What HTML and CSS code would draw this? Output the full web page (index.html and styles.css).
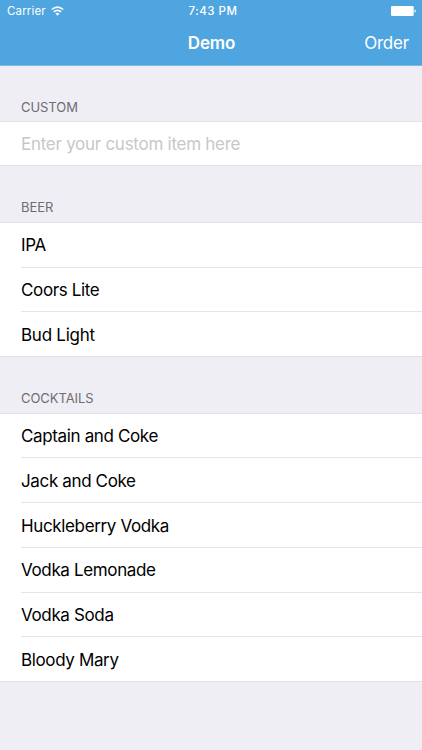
FILE: index.html
```html
<!DOCTYPE html>
<html lang="en">
<head>
<meta charset="utf-8">
<title>Demo</title>
<link rel="stylesheet" href="styles.css">
</head>
<body>
<header class="top">
  <div class="status">
    <div class="carrier"><span>Carrier</span>
      <svg class="wifi" width="13" height="10" viewBox="0 0 13 10" fill="none" stroke="#fff" stroke-width="1.6"><path d="M.8 3.5Q6.5-1.3 12.2 3.5M2.8 5.9Q6.5 2.7 10.2 5.9"/><path d="M4.5 7.5Q6.5 6 8.5 7.5L6.5 9.7Z" fill="#fff" stroke="none"/></svg>
    </div>
    <div class="time">7:43 PM</div>
    <svg class="battery" width="25" height="10" viewBox="0 0 25 10" fill="#fff"><rect width="22.7" height="10" rx="1.2"/><path d="M23.5 3.4Q24.8 3.8 24.8 5T23.5 6.6Z"/></svg>
  </div>
  <nav class="nav"><h1 class="title">Demo</h1><span class="order">Order</span></nav>
</header>
<main>
  <h2 class="heading first"><span>CUSTOM</span></h2>
  <div class="group input"><div class="row placeholder"><span>Enter your custom item here</span></div></div>
  <h2 class="heading"><span>BEER</span></h2>
  <ul class="group">
    <li class="row"><span>IPA</span></li>
    <li class="row"><span>Coors Lite</span></li>
    <li class="row bud"><span>Bud Light</span></li>
  </ul>
  <h2 class="heading"><span>COCKTAILS</span></h2>
  <ul class="group cocktails">
    <li class="row"><span>Captain and Coke</span></li>
    <li class="row"><span>Jack and Coke</span></li>
    <li class="row"><span>Huckleberry Vodka</span></li>
    <li class="row"><span>Vodka Lemonade</span></li>
    <li class="row"><span>Vodka Soda</span></li>
    <li class="row"><span>Bloody Mary</span></li>
  </ul>
</main>
</body>
</html>
```
FILE: styles.css
```css
* { box-sizing: border-box; }
body { margin: 0; height: 750px; overflow: hidden; background: #efeef4; color: #000; font-family: Inter, "Liberation Sans", sans-serif; }
.top { height: 66px; background: #4fa5df; color: #fff; border-bottom: 1px solid #7fb9e2; }
.status { height: 22px; padding: 0 6px 0 7px; display: grid; grid-template-columns: 1fr auto 1fr; align-items: center; font-size: 11.5px; }
.carrier { display: flex; align-items: center; gap: 5px; letter-spacing: .15px; }
.time { font-weight: 500; letter-spacing: .5px; padding-left: 3px; }
.battery { justify-self: end; }
.nav { height: 42px; padding: 0 13px; display: grid; grid-template-columns: 1fr auto 1fr; align-items: center; }
.title { grid-column: 2; margin: 0; font-size: 17px; font-weight: 600; line-height: 20px; letter-spacing: -.1px; padding-left: 1px; }
.order { justify-self: end; font-size: 17px; letter-spacing: -.2px; line-height: 20px; }
.heading { margin: 0; height: 56px; padding: 0 21px 7px; display: flex; align-items: flex-end; font-size: 13px; line-height: 16px; font-weight: 400; letter-spacing: -.05px; color: #6d6d72; }
.heading.first { height: 55px; padding-bottom: 6px; }
.group { margin: 0; padding: 0; list-style: none; background: #fff; border: solid #e2e1e6; border-width: 1px 0; }
.row { height: 44.75px; margin-left: 21px; display: flex; align-items: center; font-size: 17px; letter-spacing: -.36px; }
.row:first-child { height: 43.7px; }
.row + .row { border-top: 1px solid #e5e4e8; }
.row.bud { letter-spacing: -.25px; padding-top: 1px; }
.cocktails .row:first-child { height: 43.2px; padding-top: 1px; }
.cocktails .row + .row { padding-top: 1px; }
.input .row:first-child { height: 43px; }
.placeholder { color: #c7c7cd; letter-spacing: -.27px; }
```
